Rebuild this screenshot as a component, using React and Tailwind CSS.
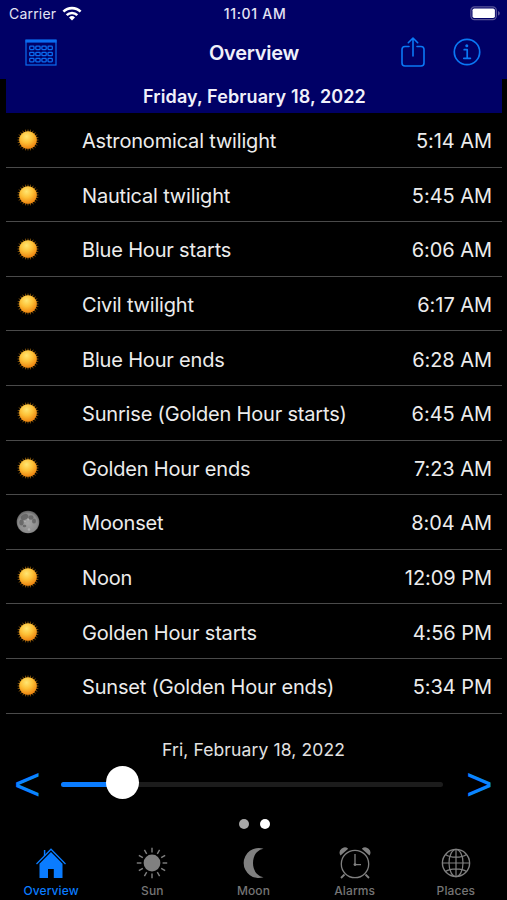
import React from 'react';

const EVENTS = [
  { icon: 'sun', label: 'Astronomical twilight', time: '5:14 AM' },
  { icon: 'sun', label: 'Nautical twilight', time: '5:45 AM' },
  { icon: 'sun', label: 'Blue Hour starts', time: '6:06 AM' },
  { icon: 'sun', label: 'Civil twilight', time: '6:17 AM' },
  { icon: 'sun', label: 'Blue Hour ends', time: '6:28 AM' },
  { icon: 'sun', label: 'Sunrise (Golden Hour starts)', time: '6:45 AM' },
  { icon: 'sun', label: 'Golden Hour ends', time: '7:23 AM' },
  { icon: 'moon', label: 'Moonset', time: '8:04 AM' },
  { icon: 'sun', label: 'Noon', time: '12:09 PM' },
  { icon: 'sun', label: 'Golden Hour starts', time: '4:56 PM' },
  { icon: 'sun', label: 'Sunset (Golden Hour ends)', time: '5:34 PM' },
];

const range = (n) => Array.from({ length: n }, (_, i) => i);

// 24-pointed star used as the rim of the small sun
const SUN_RIM = range(48)
  .map((i) => {
    const r = i % 2 ? 8 : 11.3;
    const a = (i * Math.PI) / 24;
    return `${(12 + r * Math.sin(a)).toFixed(2)},${(12 - r * Math.cos(a)).toFixed(2)}`;
  })
  .join(' ');

const SunEmoji = () => (
  <svg viewBox="0 0 24 24" className="w-6 h-6">
    <defs>
      <radialGradient id="sunFill" cx="0.42" cy="0.3" r="0.7">
        <stop offset="0" stopColor="#ffe672" />
        <stop offset="0.5" stopColor="#fdc036" />
        <stop offset="1" stopColor="#ee8410" />
      </radialGradient>
    </defs>
    <polygon points={SUN_RIM} fill="#7a4e08" />
    <circle cx="12" cy="12" r="8.8" fill="url(#sunFill)" />
  </svg>
);

const MoonEmoji = () => (
  <svg viewBox="0 0 24 24" className="w-6 h-6">
    <defs>
      <radialGradient id="moonFill" cx="0.5" cy="0.55" r="0.55">
        <stop offset="0" stopColor="#a3a3a3" />
        <stop offset="0.75" stopColor="#8c8c8c" />
        <stop offset="1" stopColor="#5e5e5e" />
      </radialGradient>
    </defs>
    <circle cx="12" cy="12" r="11.3" fill="url(#moonFill)" />
    <g fill="#5c5c5c" opacity="0.75">
      <ellipse cx="8.5" cy="7" rx="4" ry="2.8" transform="rotate(-25 8.5 7)" />
      <ellipse cx="15" cy="7.5" rx="2.6" ry="2.2" />
      <ellipse cx="18" cy="11" rx="2" ry="2.6" />
      <ellipse cx="5.5" cy="12.5" rx="2.2" ry="3" />
      <ellipse cx="8.5" cy="16" rx="1.8" ry="1.2" />
    </g>
    <g fill="#c4c4c4" opacity="0.6">
      <circle cx="12.2" cy="9.5" r="1" />
      <circle cx="13" cy="19.5" r="1.3" />
      <circle cx="9" cy="11.5" r="0.8" />
    </g>
  </svg>
);

const WifiIcon = () => (
  <svg viewBox="0 0 20 15" className="w-5 h-[15px]" fill="none" stroke="#fff" strokeWidth="2.6">
    <path d="M1.4 5.6a12.3 12.3 0 0 1 17.2 0" />
    <path d="M4.7 9.1a7.6 7.6 0 0 1 10.6 0" />
    <path d="M10 14.6 7 11.5a4.4 4.4 0 0 1 6 0z" fill="#fff" stroke="none" />
  </svg>
);

const BatteryIcon = () => (
  <svg viewBox="0 0 31 15" className="w-[31px] h-[15px]">
    <rect x="0.9" y="0.9" width="25.4" height="12.8" rx="3.6" fill="none" stroke="#5a5599" strokeWidth="1.2" />
    <rect x="2.5" y="2.5" width="22.4" height="9.6" rx="1.8" fill="#fff" />
    <path d="M28 5v4.6c1.1-.4 1.8-1.3 1.8-2.3S29.1 5.4 28 5z" fill="#5a5599" />
  </svg>
);

const CalendarIcon = () => (
  <svg viewBox="0 0 32 27" className="w-8 h-[27px]" fill="none" stroke="#0a6cf0">
    <rect x="1" y="1" width="30" height="25" strokeWidth="1.2" />
    <path d="M0.5 2.3h31" strokeWidth="2.6" />
    {range(3).map((row) =>
      range(4).map((col) => (
        <rect
          key={`${row}-${col}`}
          x={4.7 + col * 6.1}
          y={7.2 + row * 6.1}
          width="4.3"
          height="3.4"
          rx="0.8"
          strokeWidth="1.3"
        />
      ))
    )}
  </svg>
);

const ShareIcon = () => (
  <svg viewBox="0 0 26 32" className="w-[26px] h-8" fill="none" stroke="#0a78f5" strokeWidth="1.6" strokeLinecap="round" strokeLinejoin="round">
    <path d="M9 10.5H5a3 3 0 0 0-3 3V27a3 3 0 0 0 3 3h16a3 3 0 0 0 3-3V13.5a3 3 0 0 0-3-3h-4" />
    <path d="M13 20V2.2M8.3 6.7 13 2l4.7 4.7" />
  </svg>
);

const InfoIcon = () => (
  <svg viewBox="0 0 28 28" className="w-7 h-7" fill="none" stroke="#0a78f5" strokeWidth="1.7" strokeLinecap="round" strokeLinejoin="round">
    <circle cx="14" cy="14" r="12.7" />
    <path d="M11.2 11.7h3v8.5M10.8 20.3h6.6" />
    <circle cx="13.8" cy="7.7" r="1.5" fill="#0a78f5" stroke="none" />
  </svg>
);

const HomeTab = () => (
  <svg viewBox="0 0 32 32" className="w-8 h-8">
    <path d="M1.5 17 16 2.2 30.5 17" fill="none" stroke="#0a7cff" strokeWidth="1.3" />
    <path d="M9.6 3v6" stroke="#0a7cff" strokeWidth="1.5" />
    <path d="M16 5 4.5 16.7V31H13v-9h5.8v9h8.7V16.7z" fill="#0a7cff" />
  </svg>
);

const SunTab = () => (
  <svg viewBox="0 0 32 32" className="w-8 h-8">
    <circle cx="16" cy="16" r="8.4" fill="#808080" />
    {range(12).map((i) => (
      <path key={i} d="M16 0.8v4.6" stroke="#808080" strokeWidth="1.4" transform={`rotate(${i * 30} 16 16)`} />
    ))}
  </svg>
);

const MoonTab = () => (
  <svg viewBox="0 0 32 32" className="w-8 h-8">
    <path d="M26.5 1.8A15 15 0 1 0 26.5 30.2C19.500 28.800 16 22.800 16 16S19.500 3.200 26.500 1.800z" fill="#808080" />
  </svg>
);

const AlarmTab = () => (
  <svg viewBox="0 0 32 32" className="w-8 h-8" fill="none" stroke="#808080" strokeWidth="1.3">
    <circle cx="16" cy="17" r="13.7" />
    <path d="M16 7v11.5M15 17.6h7" />
    <circle cx="16" cy="17.6" r="1.4" fill="#808080" stroke="none" />
    <path d="M5.5 27.5 2 31M26.5 27.5 30 31" strokeWidth="1.8" />
    <path d="M1.5 8.5A5.2 5.2 0 0 1 9.2 1.7zM30.5 8.5A5.2 5.2 0 0 0 22.8 1.7z" fill="#808080" stroke="none" />
  </svg>
);

const GlobeTab = () => (
  <svg viewBox="0 0 32 32" className="w-8 h-8" fill="none" stroke="#808080" strokeWidth="1.2">
    <circle cx="16" cy="16" r="13.6" strokeWidth="1.4" />
    <ellipse cx="16" cy="16" rx="7" ry="13.6" />
    <path d="M16 2.4v27.2M2.4 16h27.2M5.5 7.5c5 3.6 16 3.6 21 0M5.5 24.5c5-3.6 16-3.6 21 0" />
  </svg>
);

const TABS = [
  { label: 'Overview', Icon: HomeTab, active: true },
  { label: 'Sun', Icon: SunTab },
  { label: 'Moon', Icon: MoonTab },
  { label: 'Alarms', Icon: AlarmTab },
  { label: 'Places', Icon: GlobeTab },
];

const Header = () => (
  <header className="h-[79px] bg-[#000066]">
    <div className="h-[27px] grid grid-cols-3 items-center pl-[9px] pr-[6px] text-[14px] text-[#e4e4f4]">
      <div className="flex items-center gap-[6px]">
        <span className="tracking-[0.2px]">Carrier</span>
        <WifiIcon />
      </div>
      <span className="pb-px text-center text-[14px] font-medium tracking-[0.7px]">11:01 AM</span>
      <div className="flex justify-end">
        <BatteryIcon />
      </div>
    </div>
    <div className="h-[50px] grid grid-cols-3 items-center pl-[25px] pr-[26px]">
      <button className="w-8">
        <CalendarIcon />
      </button>
      <h1 className="pl-[2px] pt-px text-center text-[20px] font-semibold tracking-[-0.25px] text-[#f0f0fa]">Overview</h1>
      <div className="flex justify-end items-center gap-[27px]">
        <button>
          <ShareIcon />
        </button>
        <button>
          <InfoIcon />
        </button>
      </div>
    </div>
  </header>
);

const EventRow = ({ icon, label, time }) => (
  <li className="h-[54.6px] flex items-center border-b border-[#4a4a4a] pt-[2px] pl-[10px] pr-[10px] text-[20px] text-[#ececec]">
    <span className="w-[66px] pb-px">{icon === 'sun' ? <SunEmoji /> : <MoonEmoji />}</span>
    <span className="flex-1 pt-px tracking-[-0.18px]">{label}</span>
    <span className="pt-px tracking-[-0.05px]">{time}</span>
  </li>
);

const App = () => {
  return (
    <div className="w-full max-w-[507px] h-[900px] flex flex-col overflow-hidden bg-black font-['Inter',sans-serif]">
      <Header />

      <main className="ml-[6px] mr-[5px]">
        <h2 className="h-[34px] flex items-center justify-center bg-[#000066] text-[18px] font-semibold tracking-[0.1px] text-[#f0f0fa]">
          <span className="pl-px">Friday, February 18, 2022</span>
        </h2>
        <ul>
          {EVENTS.map((event) => (
            <EventRow key={event.label} {...event} />
          ))}
        </ul>
      </main>

      <section className="pt-6">
        <p className="h-6 text-center text-[17.5px] leading-6 tracking-[0.12px] text-[#e2e2e2]">Fri, February 18, 2022</p>
        <div className="h-[46px] flex items-center px-[14px] font-['Liberation_Sans',sans-serif] text-[46px] leading-[44px] text-[#0a84ff]">
          <button className="w-[27px] pb-[2px]">&lt;</button>
          <div className="relative ml-5 h-[5px] w-[382px] rounded-full bg-[#1c1c1c]">
            <div className="h-full w-[62px] rounded-full bg-[#0a7cff]" />
            {/* slider thumb */}
            <div className="absolute left-[45px] -top-[16px] size-[33px] rounded-full bg-white" />
          </div>
          <button className="ml-auto w-[27px] pb-[2px]">&gt;</button>
        </div>
        <div className="mt-[11px] flex justify-center gap-[11px] pl-0.5">
          <span className="size-[10px] rounded-full bg-[#a8a8a8]" />
          <span className="size-[10px] rounded-full bg-white" />
        </div>
      </section>

      <nav className="mt-[18px] grid grid-cols-5 pr-px text-[12px] font-medium">
        {TABS.map(({ label, Icon, active }) => (
          <button
            key={label}
            className={`flex flex-col items-center pl-px ${active ? 'text-[#0a7cff]' : 'text-[#757575]'}`}
          >
            <Icon />
            <span className="mt-1 leading-4 tracking-[0.1px]">{label}</span>
          </button>
        ))}
      </nav>
    </div>
  );
};

export default App;
